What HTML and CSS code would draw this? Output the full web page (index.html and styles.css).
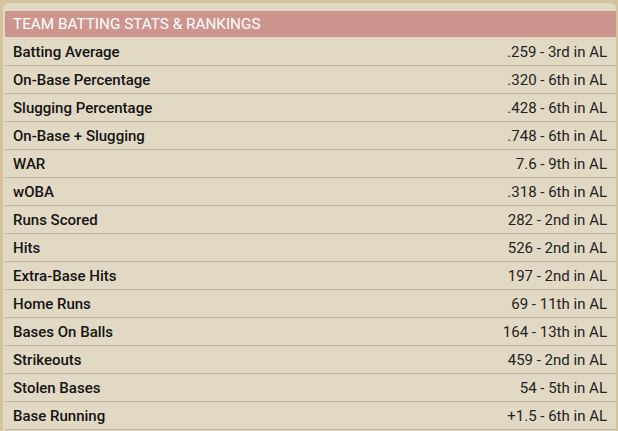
FILE: index.html
```html
<!DOCTYPE html>
<html>
<head>
<meta charset="utf-8">
<link rel="stylesheet" href="styles.css">
</head>
<body>
<div class="card">
  <div class="header">TEAM BATTING STATS &amp; RANKINGS</div>
  <div class="rows">
    <div class="row"><span class="label">Batting Average</span><span class="value">.259 - 3rd in AL</span></div>
    <div class="row"><span class="label">On-Base Percentage</span><span class="value">.320 - 6th in AL</span></div>
    <div class="row"><span class="label">Slugging Percentage</span><span class="value">.428 - 6th in AL</span></div>
    <div class="row"><span class="label">On-Base + Slugging</span><span class="value">.748 - 6th in AL</span></div>
    <div class="row"><span class="label">WAR</span><span class="value">7.6 - 9th in AL</span></div>
    <div class="row"><span class="label">wOBA</span><span class="value">.318 - 6th in AL</span></div>
    <div class="row"><span class="label">Runs Scored</span><span class="value">282 - 2nd in AL</span></div>
    <div class="row"><span class="label">Hits</span><span class="value">526 - 2nd in AL</span></div>
    <div class="row"><span class="label">Extra-Base Hits</span><span class="value">197 - 2nd in AL</span></div>
    <div class="row"><span class="label">Home Runs</span><span class="value">69 - 11th in AL</span></div>
    <div class="row"><span class="label">Bases On Balls</span><span class="value">164 - 13th in AL</span></div>
    <div class="row"><span class="label">Strikeouts</span><span class="value">459 - 2nd in AL</span></div>
    <div class="row"><span class="label">Stolen Bases</span><span class="value">54 - 5th in AL</span></div>
    <div class="row"><span class="label">Base Running</span><span class="value">+1.5 - 6th in AL</span></div>
  </div>
</div>
</body>
</html>
```

FILE: styles.css
```css
html, body {
  margin: 0;
  padding: 0;
}
body {
  background: #d5c39e;
  font-family: Roboto, "Liberation Sans", sans-serif;
  width: 618px;
  height: 431px;
  overflow: hidden;
}
.card {
  margin: 3px 2px 0 3px;
  background: #e2d9c5;
  border-radius: 6px 6px 0 0;
  padding: 8px 0 0 2px;
  height: 440px;
  box-sizing: border-box;
}
.header {
  background: #ce958e;
  color: #fff;
  font-size: 15.3px;
  height: 26px;
  line-height: 26px;
  padding-left: 8px;
}
.rows {
  padding-top: 1px;
}
.row {
  display: flex;
  justify-content: space-between;
  align-items: center;
  height: 28px;
  padding: 1px 9px 0 8px;
  border-bottom: 1px solid #bdb39f;
  box-sizing: border-box;
  font-size: 15px;
}
.label {
  font-weight: 500;
  color: #141414;
}
.value {
  color: #222;
}
```
